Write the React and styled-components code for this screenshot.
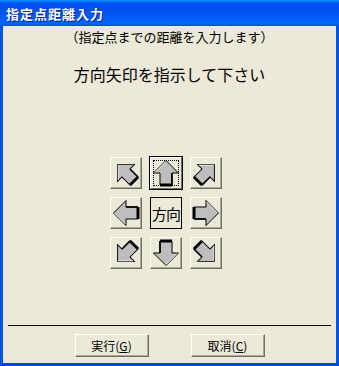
import styled, { createGlobalStyle } from "styled-components";

const Global = createGlobalStyle`
  html, body { margin: 0; padding: 0; background: #ECE9D8; }
  body { font-family: "Noto Sans CJK JP", "Liberation Sans", sans-serif; }
`
const Window = styled.div`
  width: 339px;
  height: 366px;
  display: flex;
  flex-direction: column;
  overflow: hidden;
`
const TitleBar = styled.div`
  height: 26px;
  flex: none;
  display: flex;
  align-items: center;
  padding-left: 6px;
  background: linear-gradient(180deg, #0997FF 0%, #0053EE 12%, #0050EE 40%, #0066FF 88%, #0054E3 100%);
  color: white;
  font-size: 13px;
  font-weight: 700;
  letter-spacing: 1px;
  text-shadow: 1px 1px 0 #0A1E8C;
`
const Body = styled.div`
  flex: 1;
  display: flex;
  flex-direction: column;
  align-items: center;
  background: #ECE9D8;
  border-left: 3px solid #0055E5;
  border-right: 3px solid #0055E5;
  border-bottom: 3px solid #0048D8;
`
const SubText = styled.div`
  margin-top: 2px;
  font-size: 13px;
  line-height: 17px;
  color: #000;
`
const MainText = styled.div`
  margin-top: 19px;
  font-size: 16px;
  line-height: 20px;
  color: #000;
`
const Grid = styled.div`
  margin-top: 73px;
  margin-right: 7px;
  display: grid;
  grid-template-columns: repeat(3, 32px);
  grid-template-rows: repeat(3, 32px);
  gap: 8px;
`
const ArrowButton = styled.div`
  position: relative;
  width: 32px;
  height: 32px;
  box-sizing: border-box;
  background: #ECE9D8;
  border: 1px solid;
  border-color: #fff #716F64 #716F64 #fff;
  box-shadow: ${p => p.focused ? "0 0 0 1px #000" : "inset -1px -1px 0 #ACA899"};
  display: flex;
  align-items: center;
  justify-content: center;
  svg { overflow: visible; }
`
const FocusRing = styled.div`
  position: absolute;
  inset: 2px;
  border: 1px dotted #000;
`
const CenterBox = styled.div`
  width: 32px;
  height: 32px;
  box-sizing: border-box;
  border: 1px solid #000;
  display: flex;
  align-items: center;
  justify-content: center;
  font-size: 15px;
  letter-spacing: -1px;
`
const Spacer = styled.div`
  flex: 1;
`
const Separator = styled.div`
  width: 323px;
  height: 1px;
  background: #000;
`
const ButtonRow = styled.div`
  margin-top: 8px;
  margin-bottom: 6px;
  display: flex;
  gap: 42px;
`
const PushButton = styled.div`
  width: 74px;
  height: 23px;
  box-sizing: border-box;
  background: #ECE9D8;
  border: 1px solid;
  border-color: #fff #716F64 #716F64 #fff;
  box-shadow: inset -1px -1px 0 #ACA899;
  display: flex;
  align-items: center;
  justify-content: center;
  font-size: 12px;
  color: #000;
`
const Key = styled.span`
  text-decoration: underline;
`

function Arrow({ angle }) {
  const diag = angle % 90 !== 0
  const s = diag ? 0.95 : 1
  return (
    <svg width="28" height="28" viewBox="0 0 28 28">
      <g transform={`rotate(${angle} 14 14) translate(14 14) scale(${s}) translate(-14 -14)`}>
        <polygon points="14,1.5 26.5,14 20,14 20,26 8,26 8,14 1.5,14"
          fill="#BDBDBD" stroke="#000" strokeWidth="1" />
        <line x1="8" y1="26" x2="20" y2="26" stroke="#000" strokeWidth="3" />
        <line x1="20" y1="14" x2="20" y2="26" stroke="#000" strokeWidth="1.6" />
        <polyline points="3,13.5 14,2.5" fill="none" stroke="#E4E4E4" strokeWidth="1" />
      </g>
    </svg>
  )
}

const cells = [
  { angle: -45 }, { angle: 0, focused: true }, { angle: 45 },
  { angle: -90 }, { center: true }, { angle: 90 },
  { angle: -135 }, { angle: 180 }, { angle: 135 },
]

export default function App() {
  return (
    <Window>
      <Global />
      <TitleBar>指定点距離入力</TitleBar>
      <Body>
        <SubText>（指定点までの距離を入力します）</SubText>
        <MainText>方向矢印を指示して下さい</MainText>
        <Grid>
          {cells.map((c, i) => c.center ?
            <CenterBox key={i}>方向</CenterBox> :
            <ArrowButton key={i} focused={c.focused}>
              {c.focused && <FocusRing />}
              <Arrow angle={c.angle} />
            </ArrowButton>
          )}
        </Grid>
        <Spacer />
        <Separator />
        <ButtonRow>
          <PushButton>実行(<Key>G</Key>)</PushButton>
          <PushButton>取消(<Key>C</Key>)</PushButton>
        </ButtonRow>
      </Body>
    </Window>
  )
}
